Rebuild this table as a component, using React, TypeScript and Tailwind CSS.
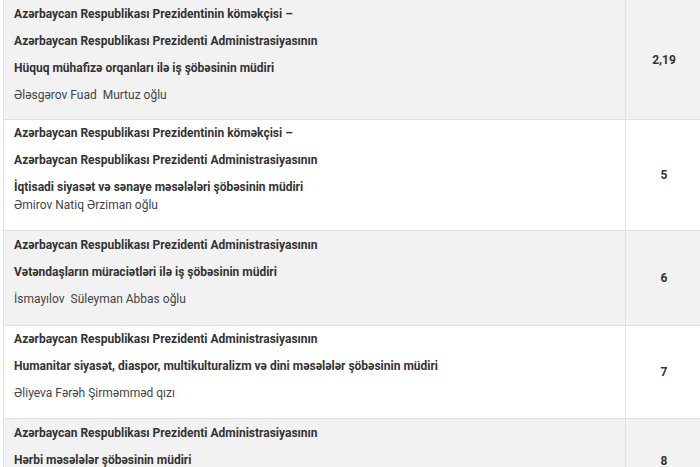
import React from "react";

type Row = {
  lines: string[];
  name: string;
  tight?: boolean;
  value: string;
  pad: string;
};

const rows: Row[] = [
  {
    lines: [
      "Azərbaycan Respublikası Prezidentinin köməkçisi –",
      "Azərbaycan Respublikası Prezidenti Administrasiyasının",
      "Hüquq mühafizə orqanları ilə iş şöbəsinin müdiri",
    ],
    name: "Ələsgərov Fuad  Murtuz oğlu",
    value: "2,19",
    pad: "pt-[5px] pb-[6px]",
  },
  {
    lines: [
      "Azərbaycan Respublikası Prezidentinin köməkçisi –",
      "Azərbaycan Respublikası Prezidenti Administrasiyasının",
      "İqtisadi siyasət və sənaye məsələləri şöbəsinin müdiri",
    ],
    name: "Əmirov Natiq Ərziman oğlu",
    tight: true,
    value: "5",
    pad: "pt-[4px] pb-[7px]",
  },
  {
    lines: [
      "Azərbaycan Respublikası Prezidenti Administrasiyasının",
      "Vətəndaşların müraciətləri ilə iş şöbəsinin müdiri",
    ],
    name: "İsmayılov  Süleyman Abbas oğlu",
    value: "6",
    pad: "pt-[5px] pb-[8px]",
  },
  {
    lines: [
      "Azərbaycan Respublikası Prezidenti Administrasiyasının",
      "Humanitar siyasət, diaspor, multikulturalizm və dini məsələlər şöbəsinin müdiri",
    ],
    name: "Əliyeva Fərəh Şirməmməd qızı",
    value: "7",
    pad: "pt-[4px] pb-[7px]",
  },
  {
    lines: [
      "Azərbaycan Respublikası Prezidenti Administrasiyasının",
      "Hərbi məsələlər şöbəsinin müdiri",
    ],
    name: "Qasımov Fuad Əhməd oğlu",
    tight: true,
    value: "8",
    pad: "pt-[5px] pb-[7px]",
  },
];

const App = () => {
  return (
    <div className="h-[467px] w-[700px] overflow-hidden bg-white pl-[3px] font-['Roboto',sans-serif] text-[12px] text-[#333]">
      <div className="-mt-px border-l border-[#e2e2e2]">
        {rows.map((row, i) => (
          <div
            key={i}
            className={`flex border-t border-[#e2e2e2] ${
              i % 2 === 0 ? "bg-[#f2f2f2]" : "bg-white"
            }`}
          >
            <div
              className={`w-[622px] shrink-0 border-r border-[#e2e2e2] px-[10px] leading-[18px] ${row.pad}`}
            >
              {row.lines.map((line, j) => {
                const last = j === row.lines.length - 1;
                if (last && row.tight) {
                  return (
                    <p key={j} className="mb-[9px]">
                      <span className="font-bold">{line}</span>
                      <br />
                      <span className="whitespace-pre-wrap text-[#444]">
                        {row.name}
                      </span>
                    </p>
                  );
                }
                return (
                  <p key={j} className="mb-[9px] font-bold">
                    {line}
                  </p>
                );
              })}
              {!row.tight && (
                <p className="mb-[9px] whitespace-pre-wrap text-[#444]">
                  {row.name}
                </p>
              )}
            </div>
            <div className="flex flex-1 items-center justify-center pl-[2px] font-bold">
              {row.value}
            </div>
          </div>
        ))}
      </div>
    </div>
  );
};

export default App;
